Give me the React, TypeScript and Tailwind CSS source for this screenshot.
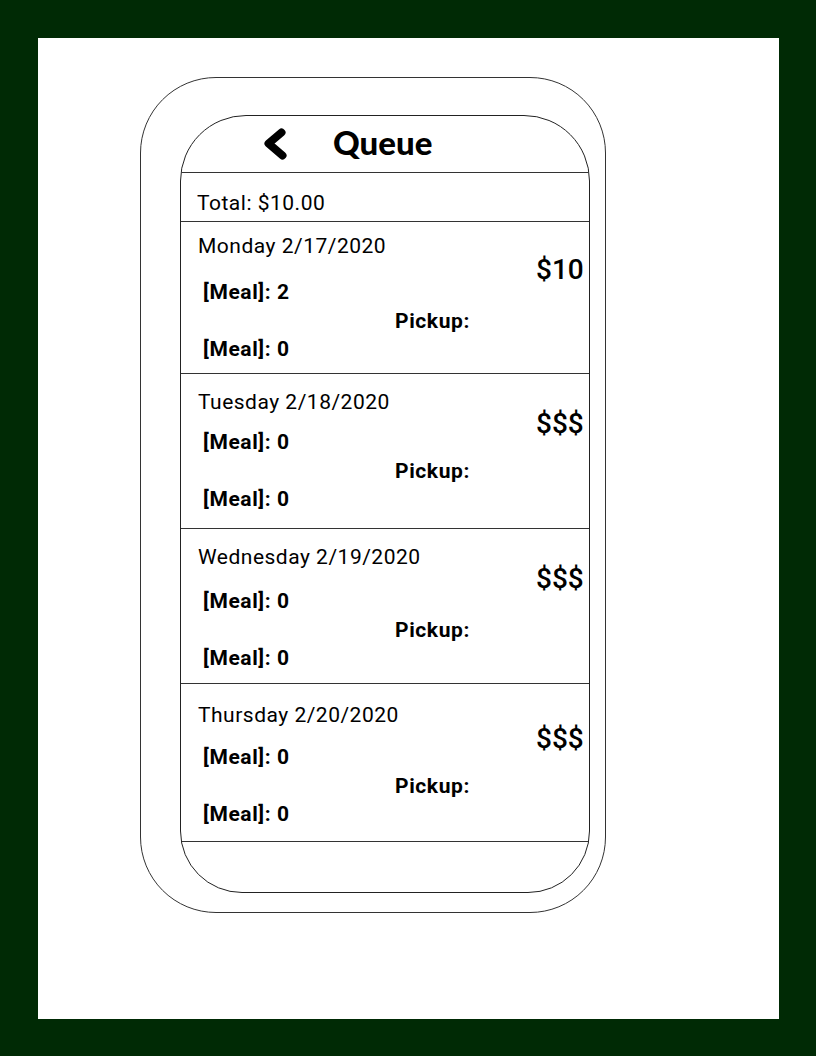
import React from "react";

type Row = { date: string; price: string; meal1: string; pt: string; gap: string; pmt: string; h: string };

const rows: Row[] = [
  { date: "Monday 2/17/2020", price: "$10", meal1: "2", pt: "pt-[12px]", gap: "mt-[20px]", pmt: "mt-[20px]", h: "h-[152px]" },
  { date: "Tuesday 2/18/2020", price: "$$$", meal1: "0", pt: "pt-[16px]", gap: "mt-[14px]", pmt: "mt-[18px]", h: "h-[155px]" },
  { date: "Wednesday 2/19/2020", price: "$$$", meal1: "0", pt: "pt-[16px]", gap: "mt-[18px]", pmt: "mt-[18px]", h: "h-[155px]" },
  { date: "Thursday 2/20/2020", price: "$$$", meal1: "0", pt: "pt-[19px]", gap: "mt-[16px]", pmt: "mt-[20px]", h: "h-[158px]" },
];

const font = { fontFamily: "Roboto, 'Liberation Sans', sans-serif" };

export default function App() {
  return (
    <div className="w-[816px] h-[1056px] bg-[#002a05] p-[38px] pr-[37px] pb-[37px]">
      <div className="w-full h-full bg-white pt-[39px] pl-[102px]" style={font}>
        <div className="w-[466px] h-[836px] rounded-[76px] border border-[#333] pt-[37px] pl-[39px]">
          <div className="w-[410px] h-[778px] rounded-t-[66px] rounded-b-[62px] border border-[#222] overflow-hidden flex flex-col">
            <div className="h-[57px] flex items-center shrink-0 border-b border-[#333]">
              <svg width="30" height="34" viewBox="0 0 30 34" className="ml-[80px] mt-[2px]">
                <path d="M20.5 4.5 L7.5 15.5 L21.5 27.5" fill="none" stroke="#000" strokeWidth="8" strokeLinecap="round" strokeLinejoin="round" />
              </svg>
              <span
                className="ml-[42px] text-[33px] font-black text-black leading-none mb-[3px]"
                style={{ fontFamily: "Lato, 'Open Sans', sans-serif" }}
              >
                Queue
              </span>
            </div>
            <div className="h-[49px] shrink-0 border-b border-[#333] pl-[16px] pt-[18px]">
              <div className="text-[21px] leading-[24px] tracking-[0.5px] text-black">Total: $10.00</div>
            </div>
            {rows.map((r) => (
              <div key={r.date} className={`${r.h} shrink-0 border-b border-[#333] pl-[17px] flex ${r.pt}`}>
                <div className="w-[338px] flex flex-col">
                  <div className="text-[21px] leading-[24px] tracking-[0.5px] text-black">{r.date}</div>
                  <div className={`${r.gap} pl-[5px] text-[21px] leading-[28.5px] tracking-[0.6px] font-bold text-black`}>[Meal]: {r.meal1}</div>
                  <div className="pl-[197px] text-[21px] leading-[28.5px] tracking-[0.6px] font-bold text-black">Pickup:</div>
                  <div className="pl-[5px] text-[21px] leading-[28.5px] tracking-[0.6px] font-bold text-black">[Meal]: 0</div>
                </div>
                <div className={`${r.pmt} text-[28px] leading-[32px] font-medium text-black whitespace-nowrap`}>{r.price}</div>
              </div>
            ))}
            <div className="flex-1" />
          </div>
        </div>
      </div>
    </div>
  );
}
